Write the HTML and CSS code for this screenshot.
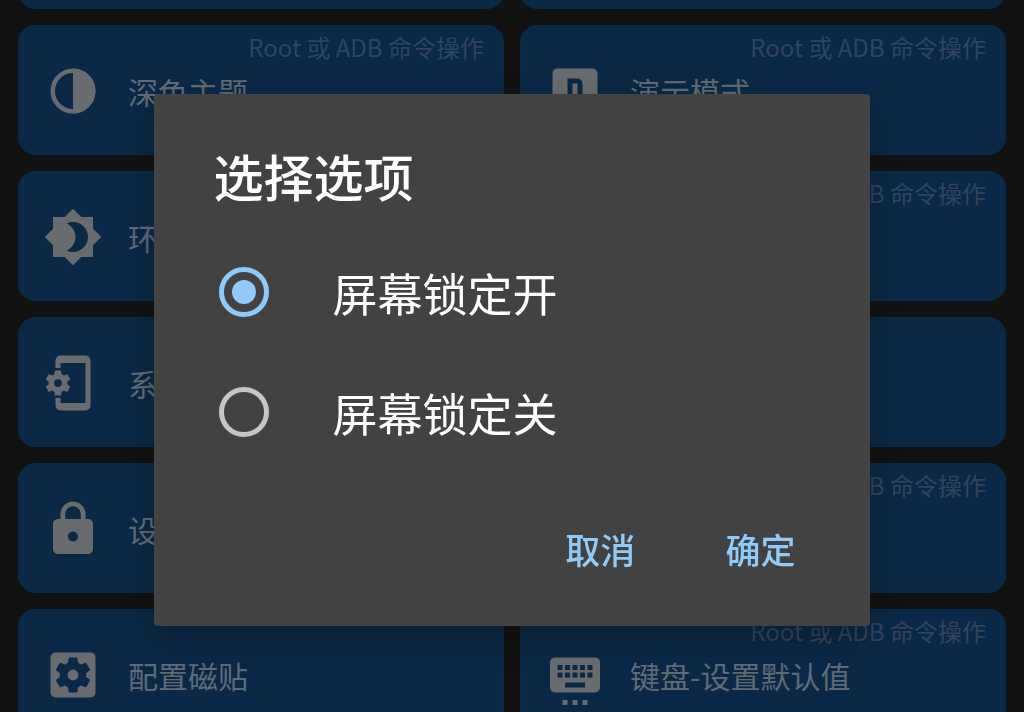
FILE: index.html
```html
<!DOCTYPE html>
<html lang="zh-CN">
<head>
<meta charset="utf-8">
<meta name="viewport" content="width=device-width, initial-scale=1">
<title>选择选项</title>
<link rel="stylesheet" href="styles.css">
</head>
<body>
<svg class="symbols" aria-hidden="true">
  <symbol id="gear" viewBox="0 0 24 24">
    <path fill-rule="evenodd" d="M19.43 12.98c.04-.32.07-.64.07-.98s-.03-.66-.07-.98l2.11-1.65c.19-.15.24-.42.12-.64l-2-3.46c-.12-.22-.39-.3-.61-.22l-2.49 1c-.52-.4-1.08-.73-1.69-.98l-.38-2.65C14.46 2.18 14.25 2 14 2h-4c-.25 0-.46.18-.49.42l-.38 2.65c-.61.25-1.17.59-1.69.98l-2.49-1c-.23-.09-.49 0-.61.22l-2 3.46c-.13.22-.07.49.12.64l2.11 1.65c-.04.32-.07.65-.07.98s.03.66.07.98l-2.11 1.65c-.19.15-.24.42-.12.64l2 3.46c.12.22.39.3.61.22l2.49-1c.52.4 1.08.73 1.69.98l.38 2.65c.03.24.24.42.49.42h4c.25 0 .46-.18.49-.42l.38-2.65c.61-.25 1.17-.59 1.69-.98l2.49 1c.23.09.49 0 .61-.22l2-3.46c.12-.22.07-.49-.12-.64zM12 15.1a3.1 3.1 0 1 1 0-6.2 3.1 3.1 0 0 1 0 6.2z"/>
  </symbol>
</svg>

<main class="tiles">
  <button class="tile" type="button"></button>
  <button class="tile" type="button"></button>

  <button class="tile" type="button">
    <svg class="icon" viewBox="0 0 24 24" aria-hidden="true"><circle class="ring" cx="12" cy="12" r="8.1"/><path d="M12 3a9 9 0 0 1 0 18z"/></svg>
    <span class="label">深色主题</span>
    <span class="tag">Root 或 ADB 命令操作</span>
  </button>
  <button class="tile" type="button">
    <svg class="icon" viewBox="0 0 24 24" aria-hidden="true"><rect x="3" y="3" width="18" height="18" rx="2"/><path class="cut" fill-rule="evenodd" d="M9 7h4a2 2 0 0 1 2 2v6a2 2 0 0 1-2 2H9zM11 9v6h2V9z"/></svg>
    <span class="label">演示模式</span>
    <span class="tag">Root 或 ADB 命令操作</span>
  </button>

  <button class="tile" type="button">
    <svg class="icon" viewBox="0 0 24 24" aria-hidden="true"><path d="M20 8.69V4h-4.69L12 .69 8.69 4H4v4.69L.69 12 4 15.31V20h4.69L12 23.31 15.31 20H20v-4.69L23.31 12z"/><path class="cut" d="M12 18c-.89 0-1.74-.2-2.5-.55C11.56 16.5 13 14.42 13 12s-1.44-4.5-3.5-5.45C10.26 6.2 11.11 6 12 6c3.31 0 6 2.69 6 6s-2.69 6-6 6z"/></svg>
    <span class="label">环</span>
  </button>
  <button class="tile" type="button">
    <span class="tag">Root 或 ADB 命令操作</span>
  </button>

  <button class="tile" type="button">
    <svg class="icon" viewBox="0 0 24 24" aria-hidden="true"><path d="M7 1h10a2 2 0 0 1 2 2v18a2 2 0 0 1-2 2H7a2 2 0 0 1-2-2v-3h2v2h10V4H7v2H5V3a2 2 0 0 1 2-2z"/><use href="#gear" x="0" y="6" width="12" height="12"/></svg>
    <span class="label">系</span>
  </button>
  <button class="tile" type="button"></button>

  <button class="tile" type="button">
    <svg class="icon" viewBox="0 0 24 24" aria-hidden="true"><path d="M18 8h-1V6c0-2.76-2.24-5-5-5S7 3.24 7 6v2H6c-1.1 0-2 .9-2 2v10c0 1.1.9 2 2 2h12c1.1 0 2-.9 2-2V10c0-1.1-.9-2-2-2zm-6 9c-1.1 0-2-.9-2-2s.9-2 2-2 2 .9 2 2-.9 2-2 2zm3.1-9H8.9V6c0-1.71 1.39-3.1 3.1-3.1s3.1 1.39 3.1 3.1z"/></svg>
    <span class="label">设</span>
  </button>
  <button class="tile" type="button">
    <span class="tag">Root 或 ADB 命令操作</span>
  </button>

  <button class="tile" type="button">
    <svg class="icon" viewBox="0 0 24 24" aria-hidden="true"><rect x="3" y="3" width="18" height="18" rx="2"/><use class="cut" href="#gear" x="3.6" y="3.6" width="16.8" height="16.8"/></svg>
    <span class="label">配置磁贴</span>
  </button>
  <button class="tile" type="button">
    <svg class="icon" viewBox="0 0 24 24" aria-hidden="true"><rect x="2" y="5" width="20" height="14" rx="2"/><path d="M7 22h2v2H7zM11 22h2v2h-2zM15 22h2v2h-2z"/><path class="cut" d="M5 8h2v2H5zM8 8h2v2H8zM11 8h2v2h-2zM14 8h2v2h-2zM17 8h2v2h-2zM5 11h2v2H5zM8 11h2v2H8zM11 11h2v2h-2zM14 11h2v2h-2zM17 11h2v2h-2zM8 15h8v2H8z"/></svg>
    <span class="label">键盘-设置默认值</span>
    <span class="tag">Root 或 ADB 命令操作</span>
  </button>
</main>

<div class="overlay">
  <form class="dialog" role="dialog" aria-modal="true" aria-labelledby="dialog-title">
    <h1 class="title" id="dialog-title">选择选项</h1>
    <div class="options" role="radiogroup" aria-labelledby="dialog-title">
      <label class="option" for="lock-on"><input class="radio" type="radio" id="lock-on" name="lock" checked>屏幕锁定开</label>
      <label class="option" for="lock-off"><input class="radio" type="radio" id="lock-off" name="lock">屏幕锁定关</label>
    </div>
    <div class="actions">
      <button class="action" type="button">取消</button>
      <button class="action" type="button">确定</button>
    </div>
  </form>
</div>
</body>
</html>
```

FILE: styles.css
```css
:root {
  --page: #121212;
  --tile: #0a2946;
  --icon: #696c6f;
  --label: #5f6b74;
  --tag: #30455c;
  --dialog: #424242;
  --accent: #90caf9;
}

* {
  box-sizing: border-box;
}

body {
  margin: 0;
  height: 100vh;
  overflow: hidden;
  background: var(--page);
  font-family: "Noto Sans CJK SC", sans-serif;
}

button {
  border: 0;
  font-family: inherit;
}

.symbols {
  position: absolute;
  width: 0;
  height: 0;
}

/* The list is scrolled so that the first row is nearly out of view. */
.tiles {
  display: grid;
  grid-template-columns: 1fr 1fr;
  grid-auto-rows: 130px;
  gap: 16px;
  padding: 0 18px;
  margin-top: -121px;
}

.tile {
  position: relative;
  display: flex;
  align-items: center;
  gap: 25px;
  padding: 2px 25px 0;
  border-radius: 18px;
  background: var(--tile);
  box-shadow: inset 0 0 0 1px #062b4d;
  text-align: left;
}

.icon {
  flex: none;
  width: 60px;
  height: 60px;
  fill: var(--icon);
}

.cut {
  fill: var(--tile);
}

.ring {
  fill: none;
  stroke: var(--icon);
  stroke-width: 1.8;
}

.label {
  color: var(--label);
  font-size: 30px;
  line-height: 40px;
  white-space: nowrap;
}

.tag {
  position: absolute;
  top: 6px;
  right: 20px;
  color: var(--tag);
  font-size: 24px;
  line-height: 32px;
  white-space: nowrap;
}

.overlay {
  position: fixed;
  inset: 0;
  display: flex;
  align-items: center;
  justify-content: center;
  padding-top: 8px;
}

.dialog {
  width: 70%;
  padding: 46px 45px 38px 60px;
  border-radius: 4px;
  background: var(--dialog);
  box-shadow: 0 12px 32px rgba(0, 0, 0, 0.25);
}

.title {
  margin: 0 0 22px;
  color: #fff;
  font-size: 50px;
  font-weight: 500;
  line-height: 70px;
}

.options {
  display: flex;
  flex-direction: column;
}

.option {
  display: flex;
  align-items: center;
  gap: 64px;
  height: 120px;
  color: #fff;
  font-size: 45px;
  padding-left: 5px;
}

.radio {
  appearance: none;
  flex: none;
  display: grid;
  place-items: center;
  width: 50px;
  height: 50px;
  margin: 0;
  border: 5px solid #c6c6c6;
  border-radius: 50%;
}

.radio:checked {
  border-color: var(--accent);
}

.radio:checked::before {
  content: "";
  width: 24px;
  height: 24px;
  border-radius: 50%;
  background: var(--accent);
}

.actions {
  display: flex;
  justify-content: flex-end;
  gap: 30px;
  margin-top: 36px;
}

.action {
  height: 80px;
  padding: 0 30px;
  background: none;
  color: var(--accent);
  font-size: 35px;
  font-weight: 500;
}
```
